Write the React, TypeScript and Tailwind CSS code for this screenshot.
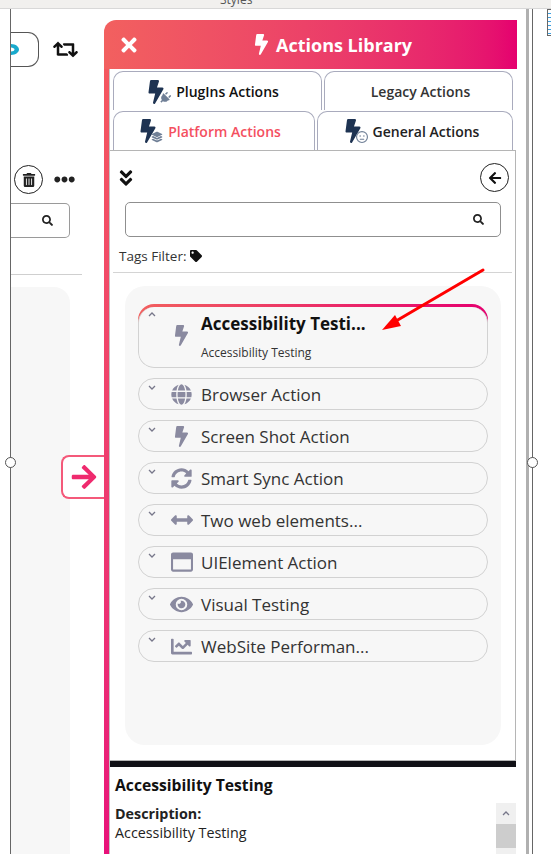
// App.tsx
import { FC, ReactNode } from 'react'
import {
  FaAngleDoubleDown,
  FaArrowLeft,
  FaArrowRight,
  FaArrowsAltH,
  FaBolt,
  FaChartLine,
  FaEllipsisH,
  FaEye,
  FaGlobe,
  FaPlug,
  FaRegWindowMaximize,
  FaRetweet,
  FaSearch,
  FaSyncAlt,
  FaTag,
  FaTimes,
  FaTrashAlt,
} from 'react-icons/fa'
import { FaLayerGroup, FaRegFaceMeh } from 'react-icons/fa6'

const BoltTabIcon: FC<{ children: ReactNode }> = ({ children }) => (
  <span className="relative block h-[24px] w-[24px] shrink-0 text-[#1e3352]">
    <FaBolt className="-ml-[3px] text-[24px]" />
    <span className="absolute bottom-[0px] right-[0px] text-[12px] text-[#6f7f96]">{children}</span>
  </span>
)

const Tab: FC<{ className: string; children: ReactNode }> = ({ className, children }) => (
  <div
    className={`flex h-[39px] items-center justify-center gap-[5px] rounded-t-[10px] border border-b-0 border-[#a9abbd] bg-white text-[14px] font-semibold ${className}`}
  >
    {children}
  </div>
)

const Chevron: FC<{ up?: boolean }> = ({ up }) => (
  <svg width="8" height="5" viewBox="0 0 8 5" className="shrink-0 text-[#77778a]">
    <path d={up ? 'M1 4l3-3 3 3' : 'M1 1l3 3 3-3'} fill="none" stroke="currentColor" strokeWidth="1.3" />
  </svg>
)

const actions: { label: string; icon: ReactNode }[] = [
  { label: 'Browser Action', icon: <FaGlobe className="text-[21px]" /> },
  { label: 'Screen Shot Action', icon: <FaBolt className="text-[21px]" /> },
  { label: 'Smart Sync Action', icon: <FaSyncAlt className="text-[21px]" /> },
  { label: 'Two web elements...', icon: <FaArrowsAltH className="text-[22px]" /> },
  { label: 'UIElement Action', icon: <FaRegWindowMaximize className="text-[22px]" /> },
  { label: 'Visual Testing', icon: <FaEye className="text-[23px]" /> },
  { label: 'WebSite Performan...', icon: <FaChartLine className="text-[21px]" /> },
]

const ActionRow: FC<{ label: string; icon: ReactNode }> = ({ label, icon }) => (
  <div className="flex h-[32px] rounded-[16px] border border-[#d2d2d2] bg-[#f7f7f7]">
    <div className="w-[23px] pl-[9px] pt-[6px]">
      <Chevron />
    </div>
    <div className="flex w-[39px] items-center justify-center text-[#8a8aa0]">{icon}</div>
    <span className="self-center whitespace-nowrap text-[17px] leading-none text-[#333333]">{label}</span>
  </div>
)

const LeftPane = () => (
  <div className="ml-[10px] flex h-[845px] w-[94px] shrink-0 flex-col border-l border-[#666666]">
    <div className="mt-[23px] flex items-center">
      <div className="flex h-[35px] w-[28px] items-center rounded-r-[11px] border border-l-0 border-[#555555]">
        <svg width="9" height="13" viewBox="0 0 9 13" className="text-[#18a9cc]">
          <path
            d="M0 1C5 1 8 4 8 6.5C8 9 5 12 0 12V8.5C2 8.5 3.5 7.5 3.5 6.5C3.5 5.5 2 4.5 0 4.5Z"
            fill="currentColor"
          />
        </svg>
      </div>
      <FaRetweet className="ml-[14px] text-[25px] text-[#111111]" />
    </div>
    <div className="mt-[98px] flex items-center">
      <div className="ml-[3px] flex h-[29px] w-[29px] items-center justify-center rounded-full border border-[#222222]">
        <FaTrashAlt className="text-[14px] text-[#222222]" />
      </div>
      <FaEllipsisH className="ml-[11px] text-[21px] text-[#222222]" />
    </div>
    <div className="mt-[9px] flex h-[35px] w-[59px] items-center justify-end rounded-r-[5px] border border-l-0 border-[#9a9a9a] pr-[16px]">
      <FaSearch className="text-[11px] text-[#222222]" />
    </div>
    <div className="mt-[36px] h-px w-[71px] bg-[#cfcfcf]" />
    <div className="mt-[12px] w-[59px] flex-1 rounded-tr-[16px] bg-[#f7f7f7]" />
  </div>
)

const LibraryPanel = () => (
  <div className="flex h-[845px] w-[413px] shrink-0 flex-col pt-[11px]">
    <div className="flex h-[49px] shrink-0 items-center rounded-tl-[12px] bg-gradient-to-r from-[#f2605f] to-[#e5006f] text-white">
      <FaTimes className="ml-[14px] text-[22px]" />
      <div className="ml-[111px] flex items-center gap-[4px]">
        <FaBolt className="text-[21px]" />
        <span className="pt-[2px] text-[18px] font-bold">Actions Library</span>
      </div>
    </div>
    <div className="flex min-h-0 flex-1">
      {/* Side strip */}
      <div className="w-[5px] shrink-0 bg-gradient-to-b from-[#f4575f] to-[#e8117a]" />
      <div className="w-px shrink-0 bg-[#c4c4c4]" />
      <div className="flex min-w-0 flex-1 flex-col">
        {/* Tabs */}
        <div className="flex h-[41px] shrink-0 gap-[2px] pl-[3px] pr-[4px] pt-[2px]">
          <Tab className="w-[209px] pr-[9px] pt-[1px] text-[#111111]">
            <BoltTabIcon>
              <FaPlug className="rotate-45" />
            </BoltTabIcon>
            PlugIns Actions
          </Tab>
          <Tab className="flex-1 pl-[4px] pt-[1px] text-[#333333]">Legacy Actions</Tab>
        </div>
        <div className="flex h-[40px] shrink-0 gap-[2px] pl-[3px] pr-[4px] pt-[1px]">
          <Tab className="w-[202px] pr-[8px] text-[#f4505f]">
            <BoltTabIcon>
              <FaLayerGroup />
            </BoltTabIcon>
            Platform Actions
          </Tab>
          <Tab className="flex-1 pr-[7px] text-[#222222]">
            <BoltTabIcon>
              <FaRegFaceMeh />
            </BoltTabIcon>
            General Actions
          </Tab>
        </div>
        {/* Library body */}
        <div className="mr-[1px] flex h-[611px] shrink-0 flex-col border border-l-0 border-[#b5b5b5]">
          <div className="flex items-center justify-between pl-[6px] pr-[6px] pt-[12px]">
            <FaAngleDoubleDown className="text-[20px] text-[#111111]" />
            <div className="flex h-[29px] w-[29px] items-center justify-center rounded-full border border-[#222222]">
              <FaArrowLeft className="text-[14px] text-[#111111]" />
            </div>
          </div>
          <div className="ml-[15px] mr-[14px] mt-[10px] flex h-[35px] shrink-0 items-center justify-end rounded-[5px] border border-[#8f8f8f] pr-[16px]">
            <FaSearch className="text-[11px] text-[#222222]" />
          </div>
          <div className="ml-[9px] mt-[10px] flex items-center gap-[4px] text-[13.5px] leading-[18px] text-[#333333]">
            Tags Filter: <FaTag className="text-[12px] text-[#111111]" />
          </div>
          <div className="mx-[3px] mt-[7px] h-px shrink-0 bg-[#d4d4d4]" />
          <div className="ml-[15px] mr-[14px] mt-[13px] flex h-[459px] flex-col gap-[10px] rounded-[20px] bg-[#f7f7f7] px-[13px] pt-[18px]">
            <div className="h-[64px] shrink-0 overflow-hidden rounded-[16px] bg-[linear-gradient(to_right,#f2605f,#e5006f)] bg-[length:100%_20px] bg-no-repeat">
              <div className="mt-[3px] flex h-[61px] rounded-[16px] border border-t-0 border-[#d2d2d2] bg-[#f7f7f7]">
                <div className="w-[23px] pl-[9px] pt-[5px]">
                  <Chevron up />
                </div>
                <div className="flex w-[39px] items-start justify-center pt-[18px] text-[#8a8aa0]">
                  <FaBolt className="text-[21px]" />
                </div>
                <div className="flex flex-col pt-[5px]">
                  <span className="whitespace-nowrap text-[17px] font-bold leading-[24px] text-[#111111]">
                    Accessibility Testi...
                  </span>
                  <span className="mt-[9px] text-[12px] leading-[16px] text-[#333333]">Accessibility Testing</span>
                </div>
              </div>
            </div>
            {actions.map((a) => (
              <ActionRow key={a.label} label={a.label} icon={a.icon} />
            ))}
          </div>
        </div>
        <div className="mr-[1px] h-[6px] shrink-0 bg-[#111116]" />
        {/* Details */}
        <div className="mr-[1px] flex min-h-0 flex-1 overflow-hidden">
          <div className="flex-1 pl-[5px] pt-[7px] text-[#222222]">
            <div className="text-[15.7px] font-bold leading-[22px] text-[#111111]">Accessibility Testing</div>
            <div className="mt-[9px] text-[14.3px] font-bold leading-[18px]">Description:</div>
            <div className="mt-[1px] text-[14.3px] leading-[18px]">Accessibility Testing</div>
          </div>
          <div className="mt-[36px] flex w-[20px] flex-col bg-[#f0f0f0]">
            <div className="flex h-[21px] items-center justify-center">
              <Chevron up />
            </div>
            <div className="h-[24px] bg-[#cdcdcd]" />
          </div>
        </div>
      </div>
    </div>
  </div>
)

export default function App() {
  return (
    <div className="relative h-[854px] w-[551px] overflow-hidden bg-white font-['Open_Sans','Noto_Sans',sans-serif]">
      <div className="h-[9px] overflow-hidden border-b border-[#d8d8d8] bg-[#f1f0ee] pl-[220px]">
        <div className="-mt-[7px] text-[12px] leading-[14px] text-[#555555]">Styles</div>
      </div>
      <div className="flex">
        <LeftPane />
        <LibraryPanel />
        <div className="ml-[9px] flex h-[845px] flex-1">
          <div className="w-[3px] bg-[#b0b0b0]" />
          <div className="ml-[3px] w-px bg-[#666666]" />
          <div className="ml-[14px] h-[27px] w-[7px] border border-r-0 border-[#666666] bg-[repeating-linear-gradient(to_bottom,#ffffff_0,#ffffff_3px,#3b9fe0_3px,#3b9fe0_4px)]" />
        </div>
      </div>
      {/* selection handles */}
      <span className="absolute left-[5px] top-[457px] h-[11px] w-[11px] rounded-full border border-[#555555] bg-white" />
      <span className="absolute left-[527px] top-[457px] h-[11px] w-[11px] rounded-full border border-[#555555] bg-white" />
      {/* collapse tab */}
      <div className="absolute left-[61px] top-[455px] flex h-[44px] w-[43px] items-center justify-center rounded-l-[8px] border-2 border-r-0 border-[#f4597a] bg-white">
        <FaArrowRight className="text-[28px] text-[#ef2a6e]" />
      </div>
      {/* annotation arrow */}
      <svg className="absolute left-[380px] top-[264px]" width="110" height="70" viewBox="0 0 110 70">
        <path d="M103 6L16 57" stroke="#ff0000" strokeWidth="3" strokeLinecap="round" />
        <path d="M2 66L15 51L21 62Z" fill="#ff0000" />
      </svg>
    </div>
  )
}
